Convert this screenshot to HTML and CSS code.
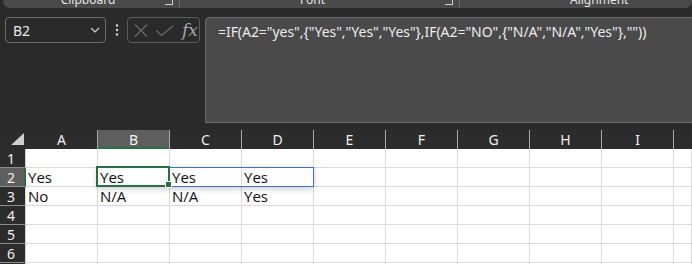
FILE: index.html
```html
<!DOCTYPE html>
<html lang="en">
<head>
    <meta charset="UTF-8">
    <title>Book1 - Excel</title>
    <link rel="stylesheet" href="styles.css">
</head>
<body>

<div class="app">
    <!-- ribbon, scrolled so only the group labels peek out -->
    <div class="ribbon">
        <div class="group group-clip"><span class="group-label">Clipboard</span><span class="launcher"></span></div>
        <div class="group group-font"><span class="group-label">Font</span><span class="launcher"></span></div>
        <div class="group group-align"><span class="group-label">Alignment</span></div>
    </div>

    <div class="formula-row">
        <div class="namebox">
            <span>B2</span>
            <svg width="10" height="6" viewBox="0 0 10 6"><path d="M1 1l4 4 4-4" fill="none" stroke="#cfcfcf" stroke-width="1.2"/></svg>
        </div>
        <div class="more">
            <svg width="4" height="14" viewBox="0 0 4 14"><circle cx="2" cy="2.5" r="1.2" fill="#d8d8d8"/><circle cx="2" cy="7" r="1.2" fill="#d8d8d8"/><circle cx="2" cy="11.5" r="1.2" fill="#d8d8d8"/></svg>
        </div>
        <div class="fx-buttons">
            <svg width="14" height="13" viewBox="0 0 14 13"><path d="M1 0.5l12 12M13 0.5l-12 12" stroke="#6c6c6c" stroke-width="1.2" fill="none"/></svg>
            <svg width="18" height="11" viewBox="0 0 18 11"><path d="M0.5 5.5l5 5 12-10" stroke="#6c6c6c" stroke-width="1.2" fill="none"/></svg>
            <span class="fx">fx</span>
        </div>
        <div class="formula">=IF(A2="yes",{"Yes","Yes","Yes"},IF(A2="NO",{"N/A","N/A","Yes"},""))</div>
    </div>

    <div class="sheet">
        <div class="corner"><svg width="13" height="12" viewBox="0 0 13 12"><path d="M13 0V12H0Z" fill="#cfcfcf"/></svg></div>
        <div class="col-head">A</div>
        <div class="col-head active">B</div>
        <div class="col-head">C</div>
        <div class="col-head">D</div>
        <div class="col-head">E</div>
        <div class="col-head">F</div>
        <div class="col-head">G</div>
        <div class="col-head">H</div>
        <div class="col-head">I</div>
        <div class="col-head last"></div>

        <div class="row-head">1</div>
        <div class="cell"></div><div class="cell"></div><div class="cell"></div><div class="cell"></div><div class="cell"></div><div class="cell"></div><div class="cell"></div><div class="cell"></div><div class="cell"></div><div class="cell"></div>

        <div class="row-head active">2</div>
        <div class="cell">Yes</div>
        <div class="cell selected">Yes<span class="spill"></span><span class="handle"></span></div>
        <div class="cell">Yes</div><div class="cell">Yes</div><div class="cell"></div><div class="cell"></div><div class="cell"></div><div class="cell"></div><div class="cell"></div><div class="cell"></div>

        <div class="row-head">3</div>
        <div class="cell">No</div><div class="cell">N/A</div><div class="cell">N/A</div><div class="cell">Yes</div><div class="cell"></div><div class="cell"></div><div class="cell"></div><div class="cell"></div><div class="cell"></div><div class="cell"></div>

        <div class="row-head">4</div>
        <div class="cell"></div><div class="cell"></div><div class="cell"></div><div class="cell"></div><div class="cell"></div><div class="cell"></div><div class="cell"></div><div class="cell"></div><div class="cell"></div><div class="cell"></div>

        <div class="row-head">5</div>
        <div class="cell"></div><div class="cell"></div><div class="cell"></div><div class="cell"></div><div class="cell"></div><div class="cell"></div><div class="cell"></div><div class="cell"></div><div class="cell"></div><div class="cell"></div>

        <div class="row-head">6</div>
        <div class="cell"></div><div class="cell"></div><div class="cell"></div><div class="cell"></div><div class="cell"></div><div class="cell"></div><div class="cell"></div><div class="cell"></div><div class="cell"></div><div class="cell"></div>

        <div class="row-head">7</div>
        <div class="cell"></div><div class="cell"></div><div class="cell"></div><div class="cell"></div><div class="cell"></div><div class="cell"></div><div class="cell"></div><div class="cell"></div><div class="cell"></div><div class="cell"></div>
    </div>
</div>

</body>
</html>
```

FILE: styles.css
```css
body {
    margin: 0;
    background-color: #2a2a2a;
    font-family: "Noto Sans", "Open Sans", sans-serif;
    color: #e8e8e8;
}
.app {
    width: 692px;
    height: 264px;
    overflow: hidden;
}

/* ribbon */
.ribbon {
    display: flex;
    height: 30px;
    margin: -22px 0 0 3px;
    background-color: #4a4a4a;
    border-radius: 0 0 7px 7px;
}
.group {
    display: flex;
    align-items: flex-start;
    padding-top: 14px;
    box-sizing: border-box;
    height: 30px;
}
.group-clip {
    width: 177px;
    border-right: 1px solid #6a6a6a;
}
.group-font {
    width: 280px;
    border-right: 1px solid #6a6a6a;
}
.group-align {
    flex: 1;
}
.group-label {
    flex: 1;
    font-size: 12px;
    line-height: 16px;
    color: #e6e6e6;
    text-align: center;
}
.group-clip .group-label {
    padding-left: 8px;
}
.group-align .group-label {
    flex: none;
    padding-left: 110px;
}
.launcher {
    width: 7px;
    height: 7px;
    margin: 5px 6px 0 0;
    border-right: 1px solid #d0d0d0;
    border-bottom: 1px solid #d0d0d0;
}

/* name box + formula bar */
.formula-row {
    display: flex;
    align-items: flex-start;
    margin-top: 9px;
    padding-left: 5px;
    margin-right: -10px;
}
.namebox {
    display: flex;
    align-items: center;
    justify-content: space-between;
    width: 101px;
    height: 26px;
    box-sizing: border-box;
    padding: 0 5px 0 7px;
    border: 1px solid #6e6e6e;
    border-radius: 4px;
    font-size: 14px;
}
.more {
    display: flex;
    align-items: center;
    height: 26px;
    padding: 0 8px 0 9px;
}
.fx-buttons {
    display: flex;
    align-items: center;
    gap: 8px;
    width: 73px;
    height: 26px;
    box-sizing: border-box;
    padding-left: 6px;
    border: 1px solid #5c5c5c;
    border-radius: 4px;
}
.fx {
    font-family: "DejaVu Serif", "Liberation Serif", serif;
    font-style: italic;
    font-size: 17px;
    line-height: 20px;
    color: #a9a9a9;
    margin-left: 0;
}
.formula {
    flex: 1;
    height: 106px;
    box-sizing: border-box;
    margin-left: 5px;
    padding: 4px 12px;
    background-color: #4a4a4a;
    border: 1px solid #6c6c6c;
    border-radius: 4px 0 0 0;
    font-size: 14px;
    line-height: 20px;
    letter-spacing: -0.05px;
    color: #ececec;
    white-space: nowrap;
}

/* worksheet grid */
.sheet {
    display: grid;
    grid-template-columns: 26px repeat(9, 72px) 1fr;
    grid-template-rows: 19px repeat(7, 19px);
    margin-top: 7px;
    background-color: #fff;
}
.corner {
    display: flex;
    align-items: flex-end;
    justify-content: flex-end;
    padding: 0 2px 4px 0;
    background-color: #2c2c2c;
}
.col-head {
    background-color: #2c2c2c;
    border-right: 1px solid #a8a8a8;
    font-size: 14px;
    line-height: 19px;
    text-align: center;
    color: #f0f0f0;
}
.col-head.active {
    background-color: #5e5e5e;
    box-shadow: inset 0 -2px 0 #217346;
}
.col-head.last {
    border-right: none;
}
.row-head {
    background-color: #2c2c2c;
    border-right: 1px solid #d4d4d4;
    border-bottom: 1px solid #8c8c8c;
    font-size: 14px;
    line-height: 19px;
    padding-right: 3px;
    text-align: center;
    color: #f0f0f0;
}
.row-head.active {
    background-color: #5e5e5e;
    border-right-color: #217346;
    box-shadow: inset -1px 0 0 #217346;
}
.cell {
    border-right: 1px solid #dadada;
    border-bottom: 1px solid #dadada;
    padding-left: 2px;
    font-family: "Open Sans", sans-serif;
    font-size: 15px;
    line-height: 18px;
    color: #111;
    overflow: hidden;
    white-space: nowrap;
}
.cell.selected {
    position: relative;
    overflow: visible;
    z-index: 2;
}
.cell.selected::before {
    content: "";
    position: absolute;
    top: -2px;
    left: -2px;
    right: -1px;
    bottom: -1px;
    border: 2px solid #217346;
    z-index: 3;
}
/* dynamic array spill outline over B2:D2 */
.spill {
    position: absolute;
    top: -1px;
    left: -1px;
    width: 215px;
    height: 18px;
    border: 1px solid #3c72c8;
    box-shadow: 0 2px 6px rgba(0, 0, 0, 0.2);
    pointer-events: none;
}
.handle {
    position: absolute;
    right: -3px;
    bottom: -2px;
    width: 5px;
    height: 5px;
    background-color: #217346;
    border: 1px solid #fff;
    z-index: 4;
}
```
